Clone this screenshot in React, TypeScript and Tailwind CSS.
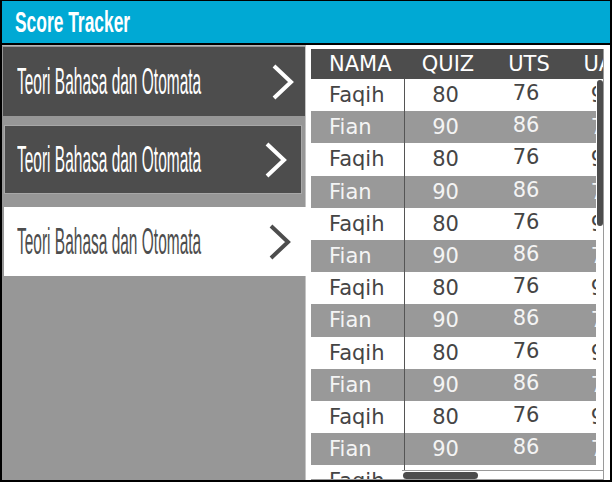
const rows = Array.from({ length: 13 }, (_, i) =>
  i % 2 === 0
    ? { nama: 'Faqih', quiz: 80, uts: 76, uas: 92, odd: false }
    : { nama: 'Fian', quiz: 90, uts: 86, uas: 78, odd: true }
);

function Chevron({ color }: { color: string }) {
  return (
    <svg width="22" height="36" viewBox="0 0 22 36" fill="none">
      <polyline points="2,2 19,18 2,34" stroke={color} strokeWidth="4" strokeLinejoin="miter" />
    </svg>
  );
}

function ItemText({ dark }: { dark?: boolean }) {
  return (
    <span className="block w-[190px] h-[40px] overflow-visible">
      <span
        className={`inline-block whitespace-nowrap origin-left scale-x-[0.43] text-[36px] leading-[40px] ${dark ? 'text-[#4d4d4d]' : 'text-white'}`}
        style={{ fontFamily: '"Liberation Sans", Arial, sans-serif' }}
      >
        Teori Bahasa dan Otomata
      </span>
    </span>
  );
}

export default function App() {
  return (
    <div className="w-[612px] h-[482px] flex flex-col border-t border-x-2 border-b-2 border-black bg-white overflow-hidden">
      {/* Title bar */}
      <div className="h-[44px] shrink-0 bg-[#00a9d4] border-b-2 border-black flex items-center pl-[13px]">
        <span
          className="inline-block whitespace-nowrap origin-left scale-x-[0.6] text-white font-bold text-[29px] leading-[32px]"
          style={{ fontFamily: '"Liberation Sans", Arial, sans-serif' }}
        >
          Score Tracker
        </span>
      </div>

      <div className="flex-1 flex min-h-0">
        {/* Left list */}
        <div className="w-[304px] shrink-0 bg-[#979797] border-r border-[#c4c4c4] border-t border-t-[#b5b5b5] flex flex-col">
          <div className="mt-px ml-px h-[69px] bg-[#4d4d4d] flex items-center justify-between pl-[14px] pr-[11px]">
            <ItemText />
            <Chevron color="#ffffff" />
          </div>
          <div className="mt-[9px] ml-[2px] w-[298px] h-[69px] bg-[#4d4d4d] border border-[#a8a8a8] flex items-center justify-between pl-[12px] pr-[14px]">
            <ItemText />
            <Chevron color="#ffffff" />
          </div>
          <div className="mt-[13px] ml-[2px] -mr-px h-[69px] bg-white flex items-center justify-between pl-[13px] pr-[15px]">
            <ItemText dark />
            <Chevron color="#4d4d4d" />
          </div>
        </div>

        {/* Right table */}
        <div className="w-[304px] shrink-0 min-w-0 bg-white pl-[5px] pt-[4px] pr-[6px] flex flex-col" style={{ fontFamily: '"DejaVu Sans", Verdana, sans-serif' }}>
          <div className="flex-1 min-w-0 w-full flex flex-col border-r border-b border-[#9a9a9a] overflow-hidden">
            <div className="h-[30px] shrink-0 bg-[#4d4d4d] flex text-white text-[21px] leading-[30px] overflow-hidden whitespace-nowrap">
              <div className="w-[94px] shrink-0 pl-[18px]">NAMA</div>
              <div className="w-[84px] shrink-0 text-center pl-[2px]">QUIZ</div>
              <div className="w-[78px] shrink-0 text-center pl-[2px]">UTS</div>
              <div className="w-[74px] shrink-0 text-center pl-[2px]">UAS</div>
            </div>

            <div className="flex-1 relative overflow-hidden">
              <div className="absolute inset-0 right-[7px] overflow-hidden">
                {rows.map((r, i) => (
                  <div
                    key={i}
                    className={`h-[32.2px] flex text-[21px] leading-[32px] whitespace-nowrap ${r.odd ? 'bg-[#999999] text-[#f4f4f4]' : 'bg-white text-[#454545]'}`}
                  >
                    <div className="w-[94px] shrink-0 pl-[18px] border-r border-[#555555]">{r.nama}</div>
                    <div className="w-[84px] shrink-0 text-center pr-[3px]">{r.quiz}</div>
                    <div className="w-[78px] shrink-0 text-center pr-[4px] -mt-[2px]">{r.uts}</div>
                    <div className="w-[74px] shrink-0 text-center">{r.uas}</div>
                  </div>
                ))}
              </div>

              {/* vertical scrollbar */}
              <div className="absolute right-0 top-px w-[6px] h-[146px] rounded-full bg-[#4d4d4d]" />

              {/* horizontal scrollbar */}
              <div className="absolute left-[91px] right-0 bottom-0 h-[9px] bg-white border-t border-[#9a9a9a]">
                <div className="mt-px ml-px w-[75px] h-[7px] rounded-full bg-[#4d4d4d]" />
              </div>
            </div>
          </div>
        </div>
      </div>
    </div>
  );
}
